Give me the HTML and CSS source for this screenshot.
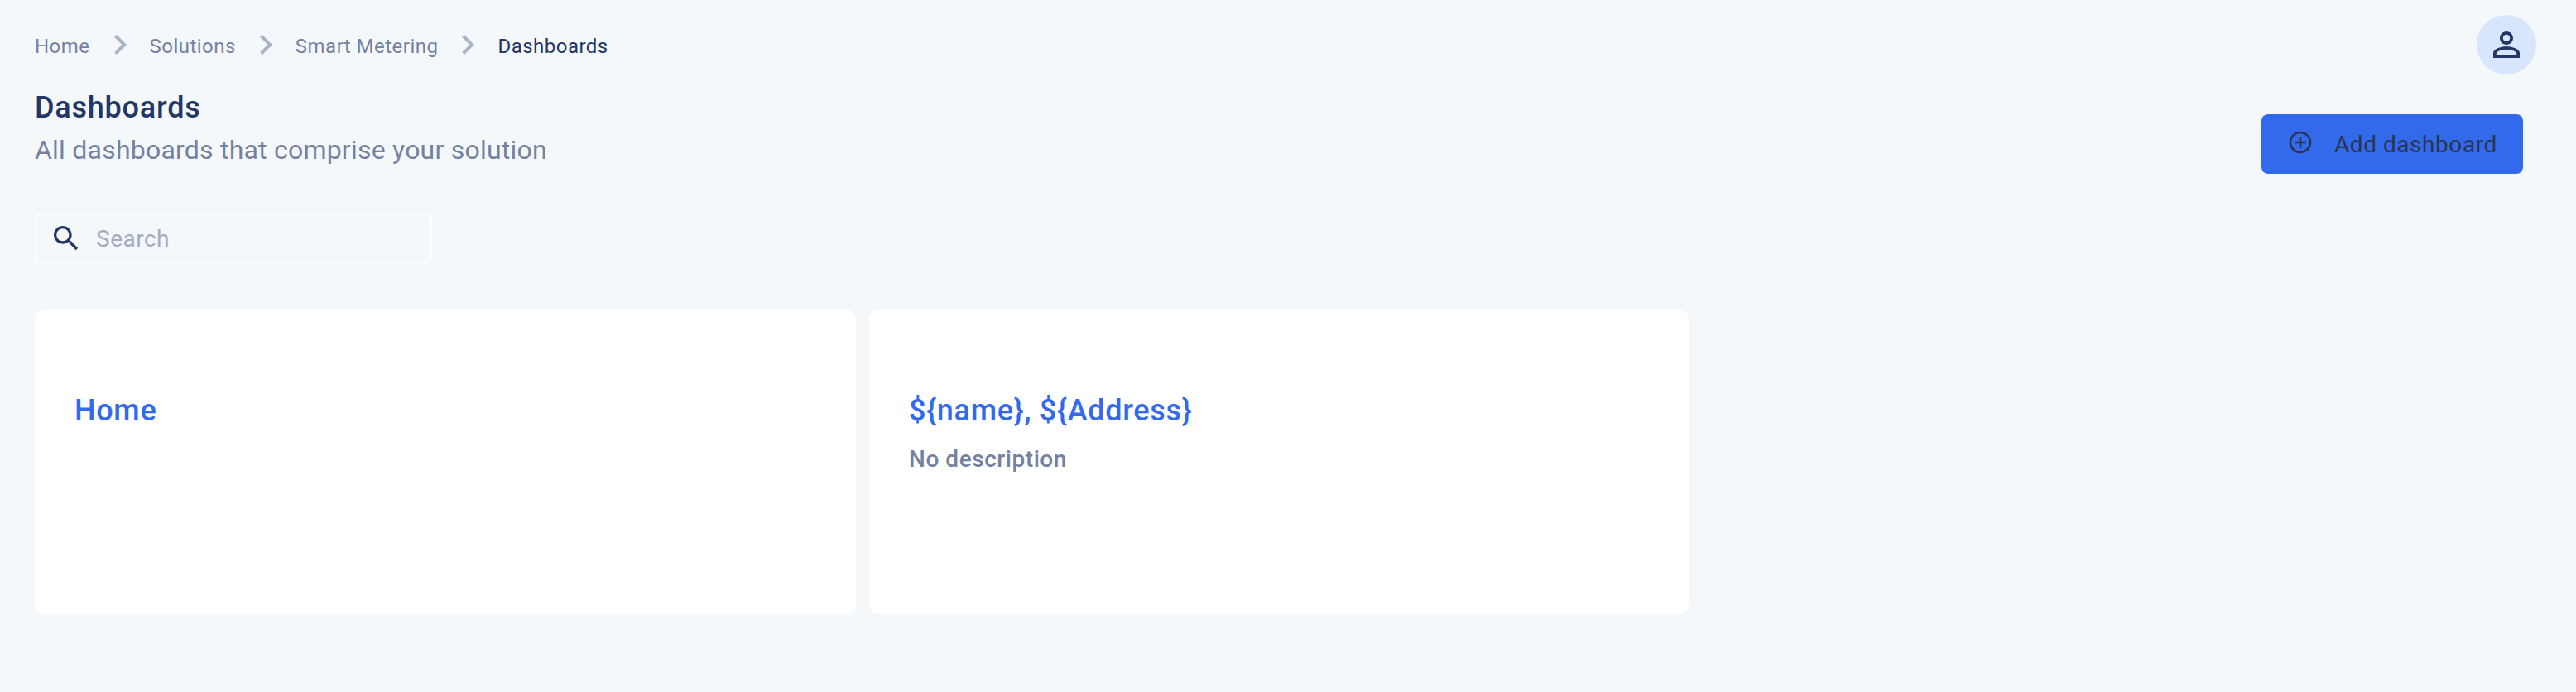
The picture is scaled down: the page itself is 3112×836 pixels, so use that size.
FILE: index.html
```html
<!DOCTYPE html>
<html lang="en">
<head>
<meta charset="utf-8">
<title>Dashboards</title>
<link rel="stylesheet" href="styles.css">
</head>
<body>
<header class="topbar">
  <nav class="breadcrumbs">
    <a class="crumb">Home</a>
    <svg class="chevron" viewBox="0 0 24 24"><path d="M10 6 8.59 7.41 13.17 12l-4.58 4.59L10 18l6-6z"/></svg>
    <a class="crumb">Solutions</a>
    <svg class="chevron" viewBox="0 0 24 24"><path d="M10 6 8.59 7.41 13.17 12l-4.58 4.59L10 18l6-6z"/></svg>
    <a class="crumb">Smart Metering</a>
    <svg class="chevron" viewBox="0 0 24 24"><path d="M10 6 8.59 7.41 13.17 12l-4.58 4.59L10 18l6-6z"/></svg>
    <a class="crumb crumb-current">Dashboards</a>
  </nav>
  <div class="avatar">
    <svg viewBox="0 0 24 24"><path d="M12 5.9a2.1 2.1 0 1 1 0 4.2 2.1 2.1 0 0 1 0-4.2m0 9c2.97 0 6.1 1.46 6.1 2.1v1.1H5.900V17c0-.64 3.130-2.1 6.100-2.1M12 4C9.790 4 8 5.790 8 8s1.790 4 4 4 4-1.790 4-4-1.790-4-4-4zm0 9c-2.670 0-8 1.340-8 4v3h16v-3c0-2.660-5.330-4-8-4z"/></svg>
  </div>
</header>
<section class="heading">
  <div class="heading-text">
    <h1 class="title">Dashboards</h1>
    <p class="subtitle">All dashboards that comprise your solution</p>
  </div>
  <button class="add-button">
    <svg viewBox="0 0 24 24"><path d="M13 7h-2v4H7v2h4v4h2v-4h4v-2h-4V7zm-1-5C6.480 2 2 6.480 2 12s4.480 10 10 10 10-4.480 10-10S17.520 2 12 2zm0 18c-4.410 0-8-3.590-8-8s3.590-8 8-8 8 3.590 8 8-3.590 8-8 8z"/></svg>
    <span>Add dashboard</span>
  </button>
</section>
<div class="search">
  <svg viewBox="0 0 24 24"><path d="M15.500 14h-.790l-.280-.270C15.410 12.590 16 11.110 16 9.500 16 5.910 13.090 3 9.500 3S3 5.910 3 9.500 5.910 16 9.500 16c1.610 0 3.090-.590 4.230-1.570l.270.280v.790l5 4.990L20.490 19l-4.990-5zm-6 0C7.010 14 5 11.990 5 9.500S7.010 5 9.500 5 14 7.010 14 9.500 11.990 14 9.500 14z"/></svg>
  <span>Search</span>
</div>
<main class="cards">
  <article class="card">
    <h2 class="card-title">Home</h2>
  </article>
  <article class="card">
    <h2 class="card-title">${name}, ${Address}</h2>
    <p class="card-description">No description</p>
  </article>
</main>
</body>
</html>
```
FILE: styles.css
```css
* { box-sizing: border-box; }
body {
  margin: 0;
  min-height: 836px;
  padding: 18px 48px 0 42px;
  background: #f4f8fb;
  color: #233665;
  font-family: Roboto, sans-serif;
}
svg { display: block; flex: none; fill: currentColor; }
h1, h2, p { margin: 0; }
.topbar { display: flex; justify-content: space-between; height: 72px; }
.breadcrumbs { display: flex; align-items: center; gap: 12px; font-size: 24px; line-height: 28px; letter-spacing: 0.48px; color: #74829f; }
.crumb { padding-top: 3px; white-space: nowrap; }
.crumb-current { color: #233665; }
.chevron { width: 48px; height: 48px; color: #a9b2c6; }
.avatar {
  display: flex; align-items: center; justify-content: center;
  width: 72px; height: 72px;
  border-radius: 50%; background: #d8e6fd;
}
.avatar svg { width: 48px; height: 48px; }
.heading { display: flex; justify-content: space-between; align-items: flex-start; padding-right: 16px; height: 168px; }
.title { padding-top: 18px; font-size: 36px; line-height: 44px; font-weight: 500; letter-spacing: 0.78px; }
.subtitle { padding-top: 9px; font-size: 32px; line-height: 40px; letter-spacing: 0.22px; color: #74829f; }
.add-button {
  display: flex; align-items: center; gap: 25px;
  width: 316px; height: 72px; margin: 48px 0 0; padding: 1px 0 0 31px;
  border: 0; border-radius: 8px; background: #3369eb; color: #2a3550;
  font: 400 28px/34px Roboto, sans-serif; letter-spacing: 0.55px;
}
.add-button svg { width: 32px; height: 32px; margin-top: -5px; }
.search {
  display: flex; align-items: center; gap: 16px;
  width: 480px; height: 60px; padding-left: 16px;
  border: 2px solid #fff; border-radius: 8px;
  font-size: 28px; letter-spacing: 0.5px;
}
.search svg { width: 40px; height: 40px; }
.search span { color: #a2abc0; }
.cards { display: grid; grid-template-columns: 992px 990px; gap: 16px; margin-top: 56px; }
.card { height: 368px; padding: 100px 48px 0; border-radius: 12px; background: #fff; }
.card-title { font-size: 36px; line-height: 44px; font-weight: 500; letter-spacing: 0.7px; color: #3369eb; }
.card-description { padding-top: 20px; font-size: 28px; line-height: 34px; font-weight: 500; letter-spacing: 0.55px; color: #74829f; }
```
